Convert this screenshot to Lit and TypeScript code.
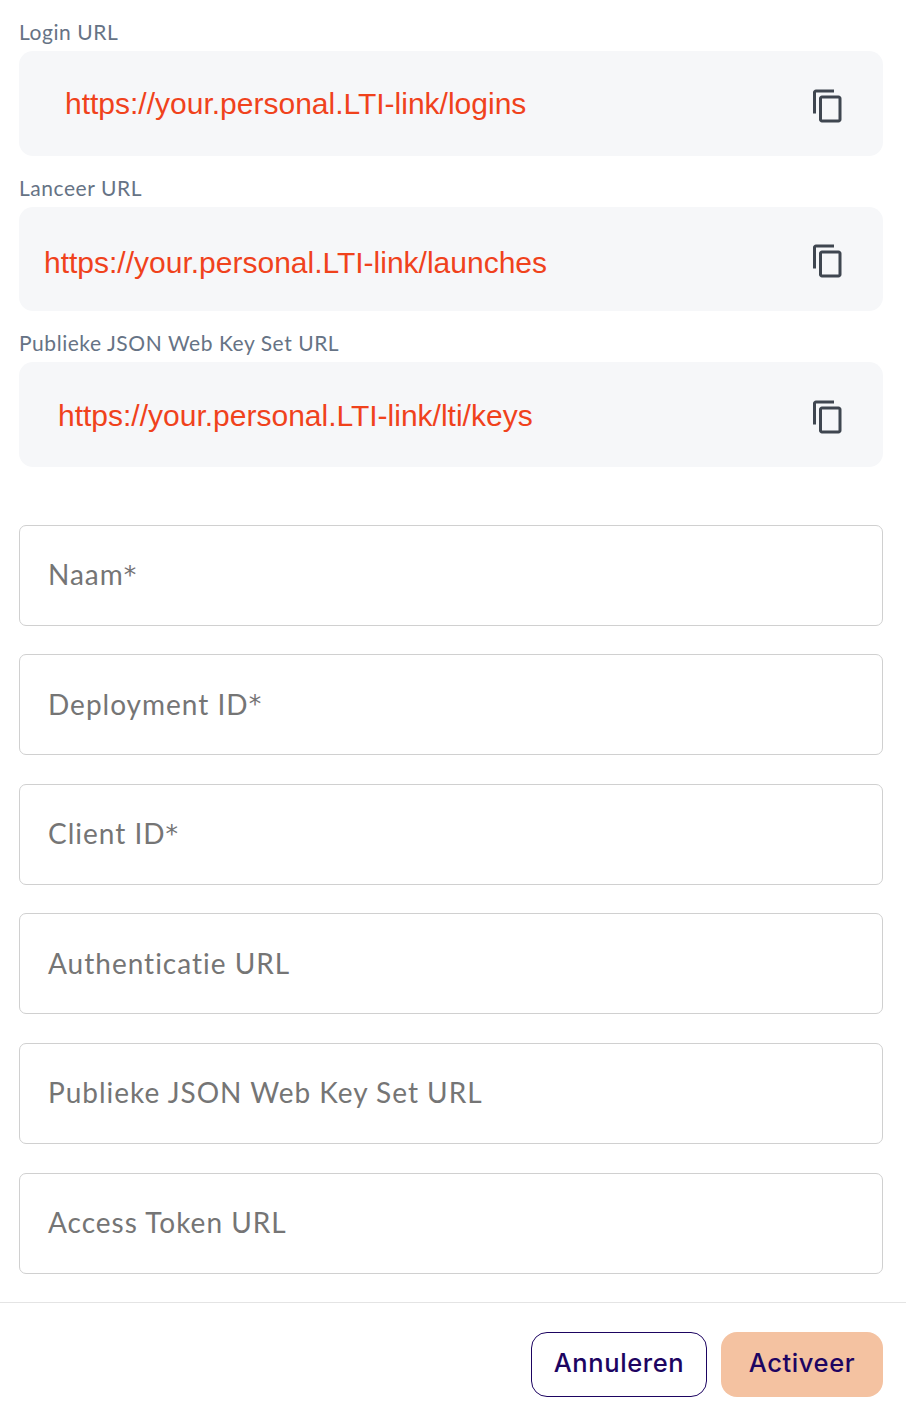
import { LitElement, html, css } from "lit";
import { customElement } from "lit/decorators.js";

const copyPath = "M16 1H4c-1.1 0-2 .9-2 2v14h2V3h12V1zm3 4H8c-1.1 0-2 .9-2 2v14c0 1.1.9 2 2 2h11c1.1 0 2-.9 2-2V7c0-1.1-.9-2-2-2zm0 16H8V7h11v14z";

const urls = [
  { label: "Login URL", url: "https://your.personal.LTI-link/logins", cls: "u1" },
  { label: "Lanceer URL", url: "https://your.personal.LTI-link/launches", cls: "u2" },
  { label: "Publieke JSON Web Key Set URL", url: "https://your.personal.LTI-link/lti/keys", cls: "u3" },
];
const fields = [
  { text: "Naam", req: true },
  { text: "Deployment ID", req: true },
  { text: "Client ID", req: true },
  { text: "Authenticatie URL", req: false },
  { text: "Publieke JSON Web Key Set URL", req: false },
  { text: "Access Token URL", req: false },
];

@customElement("app-root")
export class AppRoot extends LitElement {
  static styles = css`
    :host { display: block; width: 906px; height: 1416px; background: #fff; font-family: "Lato", "Open Sans", sans-serif; overflow: hidden; }
    .body { padding: 21px 23px 0 19px; display: flex; flex-direction: column; }
    .label { font-size: 21px; letter-spacing: 0.55px; line-height: 22px; height: 24px; margin-bottom: 6px; color: #667385; }
    .urlbox { height: 104.5px; margin-bottom: 21px; background: #f6f7f9; border-radius: 14px; display: flex; align-items: center; justify-content: space-between; padding: 0 36.7px 0 0; box-sizing: border-box; }
    .url { font-family: "Liberation Sans", Arial, sans-serif; font-size: 30px; color: #f0421c; white-space: nowrap; }
    .u1 .url { margin-left: 46px; margin-top: 2px; }
    .u2 .url { margin-left: 25px; margin-top: 9px; }
    .u3 .url { margin-left: 39px; margin-top: 4px; }
    .icon { width: 36px; height: 36px; fill: #3f4650; margin-top: 5px; display: block; }
    .fields { display: flex; flex-direction: column; gap: 28.6px; margin-top: 37.1px; }
    .field { height: 101px; box-sizing: border-box; border: 1px solid #d0d0d0; border-radius: 7px; display: flex; align-items: center; padding: 0 0 2px 28px; font-size: 28px; letter-spacing: 1px; color: #757575; white-space: pre; }
    .req { font-family: "DejaVu Sans", sans-serif; font-size: 25px; letter-spacing: 0; }
    .footer { margin-top: 28px; border-top: 1px solid #e4e4e4; padding: 29px 23px 0 0; display: flex; justify-content: flex-end; gap: 14px; }
    button { height: 65px; box-sizing: border-box; border-radius: 16px; font-family: "Inter", sans-serif; font-size: 25.5px; font-weight: 500; letter-spacing: 0.6px; color: #1d0461; padding: 0 0 3px; }
    .cancel { width: 176px; background: #fff; border: 1.5px solid #1d0461; }
    .ok { width: 162px; background: #f4c2a1; border: none; }
  `;

  render() {
    return html`
      <div class="body">
        ${urls.map(
          (u) => html`
            <div class="label">${u.label}</div>
            <div class="urlbox ${u.cls}">
              <span class="url">${u.url}</span>
              <svg class="icon" viewBox="0 0 24 24"><path d=${copyPath}></path></svg>
            </div>
          `
        )}
        <div class="fields">
          ${fields.map((f) => html`<div class="field"><span>${f.text}</span>${f.req ? html`<span class="req">*</span>` : ""}</div>`)}
        </div>
      </div>
      <div class="footer">
        <button class="cancel">Annuleren</button>
        <button class="ok">Activeer</button>
      </div>
    `;
  }
}
